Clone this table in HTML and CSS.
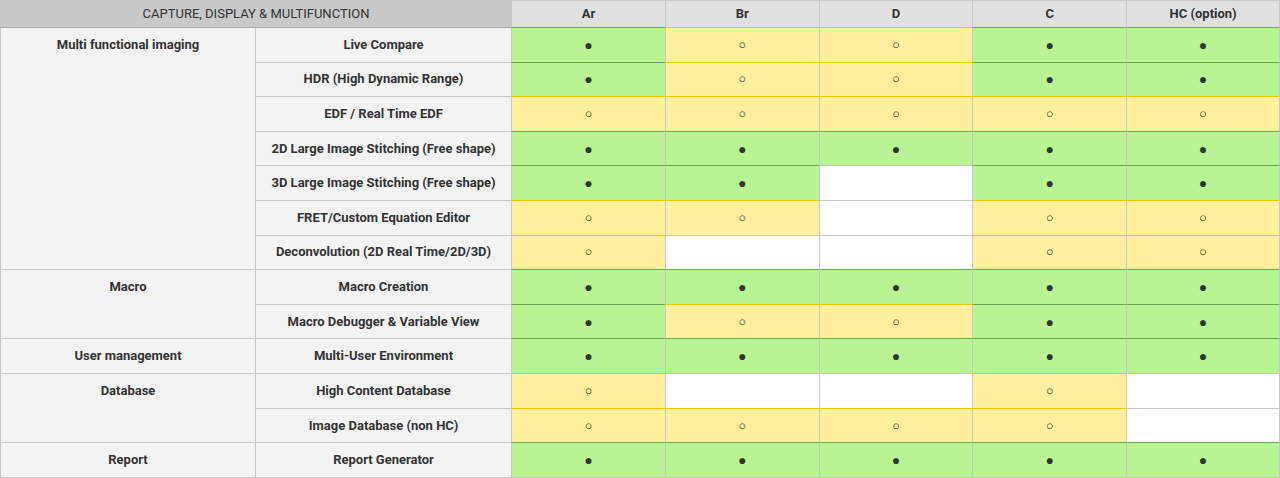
FILE: index.html
```html
<!DOCTYPE html>
<html>
<head>
<meta charset="utf-8">
<link rel="stylesheet" href="styles.css">
</head>
<body>
<table class="grid">
  <colgroup>
    <col class="c-group"><col class="c-feat">
    <col class="c-data"><col class="c-data"><col class="c-data"><col class="c-data"><col class="c-data">
  </colgroup>
  <thead>
    <tr class="head">
      <th colspan="2" class="h-main">CAPTURE, DISPLAY &amp; MULTIFUNCTION</th>
      <th>Ar</th><th>Br</th><th>D</th><th>C</th><th>HC (option)</th>
    </tr>
  </thead>
  <tbody>
    <tr class="first">
      <td rowspan="7" class="group">Multi functional imaging</td>
      <td class="feat">Live Compare</td>
      <td class="y">●</td><td class="p">○</td><td class="p">○</td><td class="y">●</td><td class="y">●</td>
    </tr>
    <tr>
      <td class="feat">HDR (High Dynamic Range)</td>
      <td class="y">●</td><td class="p">○</td><td class="p">○</td><td class="y">●</td><td class="y">●</td>
    </tr>
    <tr>
      <td class="feat">EDF / Real Time EDF</td>
      <td class="p">○</td><td class="p">○</td><td class="p">○</td><td class="p">○</td><td class="p">○</td>
    </tr>
    <tr>
      <td class="feat">2D Large Image Stitching (Free shape)</td>
      <td class="y">●</td><td class="y">●</td><td class="y">●</td><td class="y">●</td><td class="y">●</td>
    </tr>
    <tr>
      <td class="feat">3D Large Image Stitching (Free shape)</td>
      <td class="y">●</td><td class="y">●</td><td class="n"></td><td class="y">●</td><td class="y">●</td>
    </tr>
    <tr>
      <td class="feat">FRET/Custom Equation Editor</td>
      <td class="p">○</td><td class="p">○</td><td class="n"></td><td class="p">○</td><td class="p">○</td>
    </tr>
    <tr>
      <td class="feat">Deconvolution (2D Real Time/2D/3D)</td>
      <td class="p">○</td><td class="n"></td><td class="n"></td><td class="p">○</td><td class="p">○</td>
    </tr>
    <tr>
      <td rowspan="2" class="group">Macro</td>
      <td class="feat">Macro Creation</td>
      <td class="y">●</td><td class="y">●</td><td class="y">●</td><td class="y">●</td><td class="y">●</td>
    </tr>
    <tr>
      <td class="feat">Macro Debugger &amp; Variable View</td>
      <td class="y">●</td><td class="p">○</td><td class="p">○</td><td class="y">●</td><td class="y">●</td>
    </tr>
    <tr>
      <td class="group">User management</td>
      <td class="feat">Multi-User Environment</td>
      <td class="y">●</td><td class="y">●</td><td class="y">●</td><td class="y">●</td><td class="y">●</td>
    </tr>
    <tr>
      <td rowspan="2" class="group">Database</td>
      <td class="feat">High Content Database</td>
      <td class="p">○</td><td class="n"></td><td class="n"></td><td class="p">○</td><td class="n"></td>
    </tr>
    <tr>
      <td class="feat">Image Database (non HC)</td>
      <td class="p">○</td><td class="p">○</td><td class="p">○</td><td class="p">○</td><td class="n"></td>
    </tr>
    <tr class="last">
      <td class="group">Report</td>
      <td class="feat">Report Generator</td>
      <td class="y">●</td><td class="y">●</td><td class="y">●</td><td class="y">●</td><td class="y">●</td>
    </tr>
  </tbody>
</table>
</body>
</html>
```

FILE: styles.css
```css
html, body {
  margin: 0;
  padding: 0;
  background: #ffffff;
}

body {
  font-family: Roboto, "Liberation Sans", Arial, sans-serif;
  font-size: 13px;
  color: #333333;
}

.grid {
  width: 1280px;
  table-layout: fixed;
  border-collapse: separate;
  border-spacing: 0;
}

.c-group { width: 255px; }
.c-feat { width: 256px; }
.c-data { width: 153.8px; }

.grid th,
.grid td {
  padding: 0;
  text-align: center;
  border-left: 1px solid #c8c8c8;
  border-top: 1px solid #c8c8c8;
  box-sizing: border-box;
}

.grid tr > :last-child { border-right: 1px solid #c8c8c8; }
.grid tbody tr > .group { border-right: 0; }

.head th {
  height: 27px;
  background: #e0e0e0;
  font-weight: 700;
  vertical-align: middle;
  line-height: 16px;
}

.head .h-main {
  background: #c9c9c9;
  font-weight: 400;
}

.grid tbody td {
  height: 34.615px;
  vertical-align: middle;
  line-height: 16px;
}

.group,
.feat {
  background: #f3f3f3;
  font-weight: 700;
}

.grid tbody td.group {
  vertical-align: top;
  padding-top: 9px;
}

.first .group,
.first .feat { border-top-color: #a9a9a9; }

.y {
  background: #b8f592;
  border-top-color: #6aa84f !important;
  font-size: 14px;
}

.p {
  background: #fff09e;
  border-top-color: #f1c600 !important;
  font-size: 12.5px;
  font-weight: 700;
  color: #222222;
}

.n { background: #ffffff; }

.grid tbody tr.last td { border-bottom: 1px solid #c8c8c8; height: 35.615px; }
```
